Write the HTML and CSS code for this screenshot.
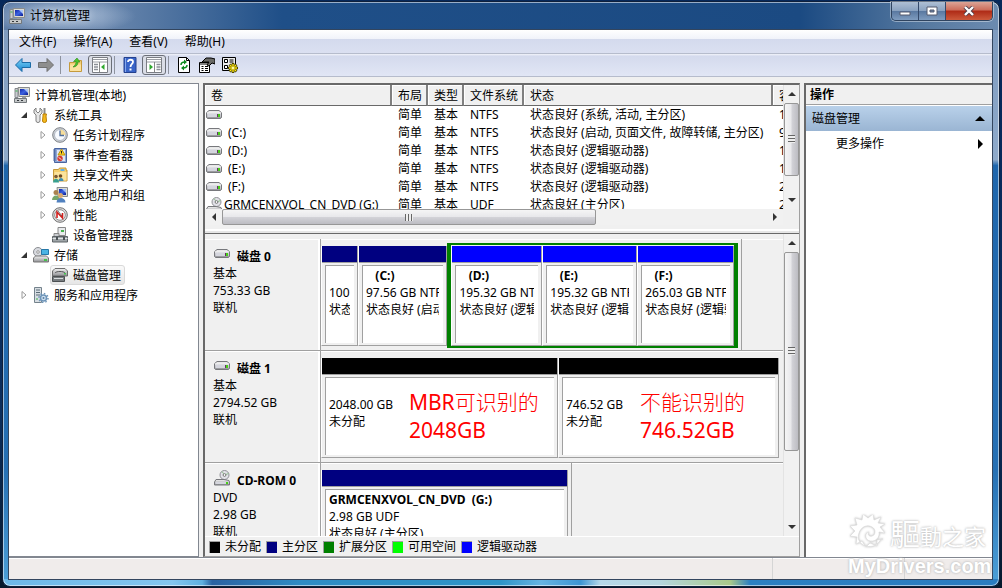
FILE: index.html
```html
<!DOCTYPE html>
<html lang="zh-CN">
<head>
  <meta charset="UTF-8">
  <meta name="viewport" content="width=device-width, initial-scale=1.0">
  <title>计算机管理</title>
  <link rel="stylesheet" href="styles.css">
</head>
<body>
  <!-- Icon set -->
  <svg class="sprites" aria-hidden="true">
    <defs>
      <linearGradient id="gray" x1="0" y1="0" x2="0" y2="1"><stop offset="0" stop-color="#f4f4f4"/><stop offset="1" stop-color="#8f9094"/></linearGradient>
      <linearGradient id="screen" x1="0" y1="0" x2="1" y2="1"><stop offset="0" stop-color="#1226a8"/><stop offset="0.5" stop-color="#3c62e0"/><stop offset="1" stop-color="#0a1c90"/></linearGradient>
      <linearGradient id="sky" x1="0" y1="0" x2="0" y2="1"><stop offset="0" stop-color="#7fd4f8"/><stop offset="1" stop-color="#1585d0"/></linearGradient>
    </defs>
    <symbol id="i-computer" viewBox="0 0 16 16">
      <path d="M4 0.5h11.5v9H5z" fill="#dcdcd4" stroke="#8a8c8c"/>
      <path d="M6 2h8v6H6z" fill="url(#screen)"/>
      <path d="M10 2h4v4z" fill="#a9c4f6"/>
      <path d="M1 1.5h3v9H1z" fill="#c9ccd0" stroke="#85888c"/>
      <path d="M1.5 4h2" stroke="#37b34a"/>
      <path d="M8 10h4v2H8z" fill="#9da0a4"/>
      <path d="M0.5 11.5h12v4h-12z" fill="#c4c7c8" stroke="#73787c"/>
      <path d="M3 13h2v1H3zM7 13h2v1H7z" fill="#33383c"/>
    </symbol>
    <symbol id="i-tools" viewBox="0 0 16 16">
      <path d="M3 1v3l2 2 2-2V1l2 2v3L7 8v6c0 2-4 2-4 0V8L1 6V3z" fill="#e6e6e6" stroke="#808080"/>
      <path d="M11.5 1v7" stroke="#8a8a8a" stroke-width="2"/>
      <path d="M10 7h3.500l-.5 2 .5 5c0 2-4 2-4 0l.5-5z" fill="#f5b91c" stroke="#b97f08"/>
    </symbol>
    <symbol id="i-clock" viewBox="0 0 16 16">
      <circle cx="8" cy="8" r="7.300" fill="#cfd3d8" stroke="#7d8186"/>
      <circle cx="8" cy="8" r="5.500" fill="#f8fbff" stroke="#b2b8c2"/>
      <path d="M8 2.500A5.500 5.500 0 0 1 13.500 8H8z" fill="#f6dd9a"/>
      <path d="M8 3.500V8.500h4" fill="none" stroke="#4e6d9a" stroke-width="1.300"/>
    </symbol>
    <symbol id="i-event" viewBox="0 0 16 16">
      <path d="M2.500 1.500h12v14h-12z" fill="#8fa6d4" stroke="#4864a0"/>
      <path d="M5 3h8v11H5z" fill="#dde6f5"/>
      <path d="M1 3h3M1 5h3M1 7h3M1 9h3M1 11h3M1 13h3" stroke="#5570a8"/>
      <path d="M9.500 2l3.500 6H6z" fill="#ffd324" stroke="#be9308"/>
      <path d="M9.500 4v2.500" stroke="#222"/>
      <circle cx="8" cy="11.500" r="2.700" fill="#d63a31"/>
      <path d="M6.800 10.300l2.400 2.400" stroke="#fff"/>
    </symbol>
    <symbol id="i-share" viewBox="0 0 16 16">
      <path d="M1.500 2.500h5l1-1.500h6.500v2h1v11h-13.500z" fill="#f5cf6d" stroke="#c5993b"/>
      <path d="M8.500 2h4v2h-4z" fill="#5fb0e8"/>
      <path d="M2.500 5h12v8.500h-12z" fill="#fbe39c"/>
      <circle cx="4" cy="9.500" r="1.800" fill="#7c5a34"/><path d="M1 15.500c0-5 6-5 6 0z" fill="#38a090"/>
      <circle cx="8.500" cy="9" r="1.800" fill="#6f4a20"/><path d="M6.500 14c0-4 5-4 5 0z" fill="#3e8fb4"/>
    </symbol>
    <symbol id="i-users" viewBox="0 0 16 16">
      <path d="M5 0.500h10.500v9H6z" fill="#dcdcd4" stroke="#8a8c8c"/>
      <path d="M7 2h7v6H7z" fill="url(#screen)"/>
      <path d="M10 2h4v4z" fill="#9fbdf5"/>
      <circle cx="4" cy="5.500" r="2.500" fill="#a98250"/><path d="M0 13c0-6 8-6 8 0z" fill="#77a66a"/>
      <circle cx="8.500" cy="8.500" r="2.500" fill="#d9aa70"/><path d="M4.500 15.500c0-6 9-6 9 0z" fill="#5181bf"/>
    </symbol>
    <symbol id="i-perf" viewBox="0 0 16 16">
      <circle cx="8" cy="8" r="7.300" fill="#e0e0e0" stroke="#707070"/>
      <circle cx="8" cy="8" r="5.300" fill="#fff" stroke="#8c8c8c"/>
      <path d="M5 11V5l5.500 6V6" fill="none" stroke="#d2201e" stroke-width="1.600"/>
      <path d="M6 4l4 5" stroke="#444" stroke-width=".7"/>
    </symbol>
    <symbol id="i-device" viewBox="0 0 16 16">
      <path d="M6 0.500h7.500v8H6z" fill="#e9ebed" stroke="#888"/>
      <path d="M9 3h3v2H9z" fill="#44b24c"/>
      <path d="M2 6.500h5v3H2z" fill="#c9ccd0" stroke="#888"/>
      <path d="M0.500 9.500h15v5.500h-15z" fill="#9fa5a8" stroke="#5c6266"/>
      <path d="M0.500 11.500h15" stroke="#e1e4e6"/>
      <path d="M4 10h2v3H4zM11 10h2v3h-2z" fill="#4c5256"/>
    </symbol>
    <symbol id="i-storage" viewBox="0 0 16 16">
      <circle cx="5" cy="5" r="4.500" fill="#d9dbe0" stroke="#8b8d92"/>
      <circle cx="5" cy="5" r="1.300" fill="#fff" stroke="#999"/>
      <path d="M8.500 2.500h7v5h-7z" fill="#4ab4e4" stroke="#2678a8"/>
      <path d="M2.500 9h11l2 2v4h-15v-4z" fill="url(#gray)" stroke="#777"/>
      <path d="M11 12h3v2h-3z" fill="#45c34c"/>
    </symbol>
    <symbol id="i-diskmgmt" viewBox="0 0 16 16">
      <path d="M3 1.500h10l2.500 2.500v5h-15V4z" fill="url(#gray)" stroke="#6c6c6c"/>
      <path d="M3 6c1-2 9-2 10 0" fill="none" stroke="#555"/>
      <path d="M12 6h2v1.500h-2z" fill="#41c44a"/>
      <path d="M0.500 9.500h12v5h-12z" fill="#777c7f" stroke="#4c5052"/>
      <path d="M2 11.500h9" stroke="#d9dcde"/>
    </symbol>
    <symbol id="i-services" viewBox="0 0 16 16">
      <path d="M1.500 0.500h7v15h-7z" fill="#d7dde2" stroke="#74828c"/>
      <path d="M3 3h4M3 5.500h4M3 8h4" stroke="#5b6c78"/>
      <path d="M3 12h2" stroke="#3cb34a"/>
      <circle cx="10.500" cy="11" r="3" fill="#cfe0f0" stroke="#6d94b8" stroke-width="1.500"/>
      <circle cx="10.500" cy="11" r="4.500" fill="none" stroke="#6d94b8" stroke-width="1.500" stroke-dasharray="1.500 2"/>
      <circle cx="10.500" cy="11" r="1" fill="#5a7ea2"/>
    </symbol>
    <symbol id="i-drive" viewBox="0 0 16 16">
      <path d="M3 3.500h10l2.500 2.200v4.800l-1 1h-13l-1-1V5.700z" fill="url(#gray)" stroke="#77787c"/>
      <path d="M1 6h14" stroke="#fff"/>
      <path d="M1.500 6.500h13v3.500h-13z" fill="#d5d6de"/>
      <path d="M11 7h1v3h-1z" fill="#636"/><path d="M12 7h2v3h-2z" fill="#46d016"/>
    </symbol>
    <symbol id="i-cd" viewBox="0 0 16 16">
      <circle cx="10.500" cy="5" r="4.500" fill="#e2e2e8" stroke="#909096"/>
      <path d="M10.500 5L8 1.500M10.500 5l4-1.500" stroke="#8fc48c"/>
      <circle cx="10.500" cy="5" r="1.400" fill="#fff" stroke="#777"/>
      <path d="M2 9.500h8l5 1 .5 1.500v3h-15v-3z" fill="url(#gray)" stroke="#77787c"/>
      <path d="M1.500 12h13v2h-13z" fill="#d5d6de"/>
      <path d="M12 12h2v2h-2z" fill="#46d016"/>
    </symbol>
    <symbol id="i-back" viewBox="0 0 16 16">
      <path d="M0.500 8L7 1.500v4h8.500v5H7v4z" fill="url(#sky)" stroke="#1b6ba6"/>
    </symbol>
    <symbol id="i-forward" viewBox="0 0 16 16">
      <path d="M15.500 8L9 1.500v4H0.500v5H9v4z" fill="#8e8e8e" stroke="#707070"/>
    </symbol>
    <symbol id="i-up" viewBox="0 0 16 16">
      <path d="M1.500 5.500h5l1-2h6v11h-12z" fill="#f3cf79" stroke="#c49a3d"/>
      <path d="M2 7.500h11V14H2z" fill="#fbe2a0"/>
      <path d="M3 10c3 0 5-2 5-5h2L7 1 3.500 4.500H6C6 7 5 8.500 3 10z" transform="translate(2 0)" fill="#4cc32c" stroke="#2b8a18" stroke-width=".6"/>
    </symbol>
    <symbol id="i-tree-pane" viewBox="0 0 16 16">
      <path d="M0.500 0.500h15v15h-15z" fill="#fff" stroke="#7b7e84"/>
      <path d="M1 2.500h14M1 5h14" stroke="#9a9da4"/>
      <path d="M2 7.500h4M2 10h4M2 12.500h4" stroke="#8b8f96" stroke-width="1.500"/>
      <path d="M7.500 5v10" stroke="#888"/><path d="M12.500 7v6l-3.500-3z" fill="#30a82e"/>
    </symbol>
    <symbol id="i-action-pane" viewBox="0 0 16 16">
      <path d="M0.500 0.500h15v15h-15z" fill="#fff" stroke="#7b7e84"/>
      <path d="M1 2.500h14M1 5h14" stroke="#9a9da4"/>
      <path d="M10.500 7.500h4M10.500 10h4M10.500 12.500h4" stroke="#8b8f96" stroke-width="1.500"/>
      <path d="M8.500 5v10" stroke="#888"/><path d="M3.500 7v6L7 10z" fill="#30a82e"/>
    </symbol>
    <symbol id="i-help" viewBox="0 0 16 16">
      <path d="M2 0.500h12v15H2z" fill="#3964c8" stroke="#24418e"/>
      <path d="M3.500 1v14" stroke="#86a8ec"/>
      <path d="M6 5c0-3 5-3 5 0 0 2-2.500 2-2.500 5" fill="none" stroke="#fff" stroke-width="1.800"/>
      <path d="M7.500 11.500h2v2h-2z" fill="#fff"/>
    </symbol>
    <symbol id="i-refresh" viewBox="0 0 16 16">
      <path d="M2.500 0.500h8l3 3v12h-11z" fill="#fff" stroke="#000"/>
      <path d="M10.500 0.500v3h3" fill="none" stroke="#000"/>
      <path d="M5 8c0-3 2-3 4-3M11 8c0 3-2 3-4 3" fill="none" stroke="#0b8a1e" stroke-width="1.500"/>
      <path d="M8 2.500L11 5 8 7.500zM8 8.500L5 11l3 2.500z" fill="#0b8a1e"/>
    </symbol>
    <symbol id="i-properties" viewBox="0 0 16 16">
      <path d="M0.500 5.500h10v10h-10z" fill="#fff" stroke="#000"/>
      <path d="M1 7h9M2.500 9.500h2M6 9.500h3M2.500 11.500h2M6 11.500h3M2.500 13.500h2M6 13.500h3" stroke="#000"/>
      <path d="M3 5l4-4h5l4 1v5l-3-1-3 3-2-1 2-3H6z" fill="#6a6a66" stroke="#000"/>
    </symbol>
    <symbol id="i-settings" viewBox="0 0 16 16">
      <path d="M0.500 0.500h13v13h-13z" fill="#eee" stroke="#000"/>
      <path d="M2.500 2.500h3v3h-3zM2.500 8.500h3v3h-3z" fill="#fff" stroke="#000"/>
      <path d="M7.500 3h4M7.500 5h4M7 12h3" stroke="#000"/>
      <path d="M11 6v10M6 11h10M7.500 7.500l7 7M14.500 7.500l-7 7" stroke="#4a4400" stroke-width="2.600"/>
      <path d="M11 7v8M7 11h8M8 8l6 6M14 8l-6 6" stroke="#ffe611" stroke-width="1.400"/>
      <circle cx="11" cy="11" r="2" fill="#fff9a0" stroke="#b5a500"/>
    </symbol>
    <symbol id="i-up-arrow" viewBox="0 0 8 8"><path d="M0 6l4-4 4 4z"/></symbol>
    <symbol id="i-down-arrow" viewBox="0 0 8 8"><path d="M0 2l4 4 4-4z"/></symbol>
    <symbol id="i-left-arrow" viewBox="0 0 8 8"><path d="M6 0L2 4l4 4z"/></symbol>
    <symbol id="i-right-arrow" viewBox="0 0 8 8"><path d="M2 0l4 4-4 4z"/></symbol>
    <symbol id="i-open" viewBox="0 0 8 8"><path d="M7 1v6H1z" fill="#333"/></symbol>
    <symbol id="i-closed" viewBox="0 0 8 8"><path d="M2 0.500L6 4 2 7.500z" fill="#fff" stroke="#999"/></symbol>
  </svg>

  <div class="window">
    <header class="titlebar">
      <svg class="icon"><use href="#i-computer"/></svg>
      <h1>计算机管理</h1>
      <div class="window-buttons">
        <button type="button" aria-label="最小化"><svg viewBox="0 0 12 10"><path d="M1 6h10v3H1z" fill="#fff" stroke="#555b6e"/></svg></button>
        <button type="button" aria-label="最大化"><svg viewBox="0 0 12 10"><path d="M1 1h10v8H1z" fill="#fff" stroke="#555b6e"/><path d="M4 4h4v2H4z" fill="#6782a8" stroke="#555b6e"/></svg></button>
        <button type="button" class="close" aria-label="关闭"><svg viewBox="0 0 12 10"><path d="M2 1l8 8M10 1L2 9" stroke="#4d3c48" stroke-width="4"/><path d="M2 1l8 8M10 1L2 9" stroke="#fff" stroke-width="2.400"/></svg></button>
      </div>
    </header>

    <div class="client">
      <nav class="menubar">
        <button type="button">文件(F)</button>
        <button type="button">操作(A)</button>
        <button type="button">查看(V)</button>
        <button type="button">帮助(H)</button>
      </nav>
      <div class="toolbar">
        <button type="button" aria-label="后退"><svg class="icon"><use href="#i-back"/></svg></button>
        <button type="button" aria-label="前进"><svg class="icon"><use href="#i-forward"/></svg></button>
        <span class="sep"></span>
        <button type="button" aria-label="向上"><svg class="icon"><use href="#i-up"/></svg></button>
        <button type="button" class="pressed" aria-label="控制台树"><svg class="icon"><use href="#i-tree-pane"/></svg></button>
        <span class="sep"></span>
        <button type="button" aria-label="帮助"><svg class="icon"><use href="#i-help"/></svg></button>
        <button type="button" class="pressed" aria-label="操作窗格"><svg class="icon"><use href="#i-action-pane"/></svg></button>
        <span class="sep"></span>
        <button type="button" aria-label="刷新"><svg class="icon"><use href="#i-refresh"/></svg></button>
        <button type="button" aria-label="属性"><svg class="icon"><use href="#i-properties"/></svg></button>
        <button type="button" aria-label="设置"><svg class="icon"><use href="#i-settings"/></svg></button>
      </div>

      <main class="panes">
        <!-- Console tree -->
        <ul class="tree">
          <li class="root"><svg class="icon"><use href="#i-computer"/></svg><span>计算机管理(本地)</span></li>
          <li class="level-1"><svg class="twist"><use href="#i-open"/></svg><svg class="icon"><use href="#i-tools"/></svg><span>系统工具</span></li>
          <li class="level-2"><svg class="twist"><use href="#i-closed"/></svg><svg class="icon"><use href="#i-clock"/></svg><span>任务计划程序</span></li>
          <li class="level-2"><svg class="twist"><use href="#i-closed"/></svg><svg class="icon"><use href="#i-event"/></svg><span>事件查看器</span></li>
          <li class="level-2"><svg class="twist"><use href="#i-closed"/></svg><svg class="icon"><use href="#i-share"/></svg><span>共享文件夹</span></li>
          <li class="level-2"><svg class="twist"><use href="#i-closed"/></svg><svg class="icon"><use href="#i-users"/></svg><span>本地用户和组</span></li>
          <li class="level-2"><svg class="twist"><use href="#i-closed"/></svg><svg class="icon"><use href="#i-perf"/></svg><span>性能</span></li>
          <li class="level-2"><svg class="twist"></svg><svg class="icon"><use href="#i-device"/></svg><span>设备管理器</span></li>
          <li class="level-1"><svg class="twist"><use href="#i-open"/></svg><svg class="icon"><use href="#i-storage"/></svg><span>存储</span></li>
          <li class="level-2"><svg class="twist"></svg><div class="selected"><svg class="icon"><use href="#i-diskmgmt"/></svg><span>磁盘管理</span></div></li>
          <li class="level-1"><svg class="twist"><use href="#i-closed"/></svg><svg class="icon"><use href="#i-services"/></svg><span>服务和应用程序</span></li>
        </ul>

        <section class="center">
          <div class="volumes">
            <div class="volume-list">
              <table>
                <colgroup><col class="c-name"><col class="c-short"><col class="c-short"><col class="c-fs"><col class="c-state"><col class="c-more"></colgroup>
                <thead>
                  <tr><th>卷</th><th>布局</th><th>类型</th><th>文件系统</th><th>状态</th><th>容量</th></tr>
                </thead>
                <tbody>
                  <tr><td><svg class="icon"><use href="#i-drive"/></svg></td><td>简单</td><td>基本</td><td>NTFS</td><td>状态良好 (系统, 活动, 主分区)</td><td>1</td></tr>
                  <tr><td><svg class="icon"><use href="#i-drive"/></svg><span class="letter">(C:)</span></td><td>简单</td><td>基本</td><td>NTFS</td><td>状态良好 (启动, 页面文件, 故障转储, 主分区)</td><td>9</td></tr>
                  <tr><td><svg class="icon"><use href="#i-drive"/></svg><span class="letter">(D:)</span></td><td>简单</td><td>基本</td><td>NTFS</td><td>状态良好 (逻辑驱动器)</td><td>1</td></tr>
                  <tr><td><svg class="icon"><use href="#i-drive"/></svg><span class="letter">(E:)</span></td><td>简单</td><td>基本</td><td>NTFS</td><td>状态良好 (逻辑驱动器)</td><td>1</td></tr>
                  <tr><td><svg class="icon"><use href="#i-drive"/></svg><span class="letter">(F:)</span></td><td>简单</td><td>基本</td><td>NTFS</td><td>状态良好 (逻辑驱动器)</td><td>2</td></tr>
                  <tr><td><svg class="icon"><use href="#i-cd"/></svg><span>GRMCENXVOL_CN_DVD (G:)</span></td><td>简单</td><td>基本</td><td>UDF</td><td>状态良好 (主分区)</td><td>2</td></tr>
                </tbody>
              </table>
            </div>
            <div class="vscroll">
              <button type="button" aria-label="向上滚动"><svg><use href="#i-up-arrow"/></svg></button>
              <div class="thumb" style="flex-grow: 73"></div>
              <div class="track" style="flex-grow: 16"></div>
              <button type="button" aria-label="向下滚动"><svg><use href="#i-down-arrow"/></svg></button>
            </div>
          </div>
          <div class="hscroll">
            <button type="button" aria-label="向左滚动"><svg><use href="#i-left-arrow"/></svg></button>
            <div class="thumb" style="flex-grow: 373"></div>
            <div class="track" style="flex-grow: 170"></div>
            <button type="button" aria-label="向右滚动"><svg><use href="#i-right-arrow"/></svg></button>
          </div>
          <div class="splitter"></div>

          <!-- Graphical disk view -->
          <div class="graph">
            <div class="disks">
              <div class="disk">
                <div class="disk-label">
                  <h2><svg class="icon"><use href="#i-drive"/></svg>磁盘 0</h2>
                  <p>基本</p><p>753.33 GB</p><p>联机</p>
                </div>
                <div class="disk-map bounded" style="width: 421px">
                  <div class="partition primary" style="flex-grow: 36"><div class="box"><div class="info"><h3>&nbsp;</h3><p>100 MB</p><p>状态良好</p></div></div></div>
                  <div class="partition primary" style="flex-grow: 90"><div class="box"><div class="info"><h3>   (C:)</h3><p>97.56 GB NTFS</p><p>状态良好 (启动, 页面文件)</p></div></div></div>
                  <div class="extended" style="flex-grow: 291">
                    <div class="partition logical" style="flex-grow: 91"><div class="box"><div class="info"><h3>   (D:)</h3><p>195.32 GB NTFS</p><p>状态良好 (逻辑驱动器)</p></div></div></div>
                    <div class="partition logical" style="flex-grow: 95"><div class="box"><div class="info"><h3>   (E:)</h3><p>195.32 GB NTFS</p><p>状态良好 (逻辑驱动器)</p></div></div></div>
                    <div class="partition logical" style="flex-grow: 97"><div class="box"><div class="info"><h3>   (F:)</h3><p>265.03 GB NTFS</p><p>状态良好 (逻辑驱动器)</p></div></div></div>
                  </div>
                </div>
              </div>
              <div class="disk">
                <div class="disk-label">
                  <h2><svg class="icon"><use href="#i-drive"/></svg>磁盘 1</h2>
                  <p>基本</p><p>2794.52 GB</p><p>联机</p>
                </div>
                <div class="disk-map" style="width: 458px">
                  <div class="partition" style="flex-grow: 237"><div class="box"><div class="info"><h3>&nbsp;</h3><p>2048.00 GB</p><p>未分配</p></div></div><p class="note"><span>MBR</span>可识别的<br><span>2048GB</span></p></div>
                  <div class="partition" style="flex-grow: 221"><div class="box"><div class="info"><h3>&nbsp;</h3><p>746.52 GB</p><p>未分配</p></div></div><p class="note">不能识别的<br><span>746.52GB</span></p></div>
                </div>
              </div>
              <div class="disk">
                <div class="disk-label">
                  <h2><svg class="icon"><use href="#i-cd"/></svg>CD-ROM 0</h2>
                  <p>DVD</p><p>2.98 GB</p><p>联机</p>
                </div>
                <div class="disk-map bounded" style="width: 251px">
                  <div class="partition primary" style="flex-grow: 1"><div class="box"><div class="info"><h3>GRMCENXVOL_CN_DVD  (G:)</h3><p>2.98 GB UDF</p><p>状态良好 (主分区)</p></div></div></div>
                </div>
              </div>
            </div>
            <div class="vscroll">
              <button type="button" aria-label="向上滚动"><svg><use href="#i-up-arrow"/></svg></button>
              <div class="thumb" style="flex-grow: 198"></div>
              <div class="track" style="flex-grow: 68"></div>
              <button type="button" aria-label="向下滚动"><svg><use href="#i-down-arrow"/></svg></button>
            </div>
          </div>
          <ul class="legend">
            <li><i class="swatch"></i>未分配</li>
            <li><i class="swatch primary"></i>主分区</li>
            <li><i class="swatch ext"></i>扩展分区</li>
            <li><i class="swatch free"></i>可用空间</li>
            <li><i class="swatch logical"></i>逻辑驱动器</li>
          </ul>
        </section>

        <aside class="actions">
          <h2>操作</h2>
          <button type="button" class="group"><span>磁盘管理</span><svg viewBox="0 0 10 10"><path d="M0 7l5-5 5 5z"/></svg></button>
          <button type="button" class="more"><span>更多操作</span><svg viewBox="0 0 10 10"><path d="M3 0l5 5-5 5z"/></svg></button>
        </aside>
      </main>

      <footer class="statusbar"><span class="main-cell"></span><span class="mid-cell"></span><span class="end-cell"></span></footer>
    </div>
  </div>

  <div class="watermark">
    <div class="brand">
      <svg viewBox="0 0 40 38"><path d="M33 24c-3 6-9 9-15 7-7-2-9-8-7-13 2-6 8-9 13-6 4 2 4 8 0 9-3 1-5-2-3-4-5 1-4 8 1 9 6 1 10-4 9-9l6 1-5-6 5-3-7-1 3-6-7 3-1-6-5 4-5-4-1 6-7-2 2 7-7 1 5 5-5 5 7 1-1 7 6-3 4 6 4-4 7 3 0-6 6-1z" fill="#fff" stroke="#ddd" stroke-width=".7"/></svg>
      <span><b>驅</b>動之家</span>
    </div>
    <div class="site">MyDrivers.com</div>
  </div>
</body>
</html>
```
FILE: styles.css
```css
/* General Reset */
* {
  margin: 0;
  padding: 0;
  box-sizing: border-box;
}

body {
  font-family: "Noto Sans", "Noto Sans CJK SC", sans-serif;
  font-size: 12px;
  line-height: 17px;
  color: #000;
  height: 100vh;
  padding: 1px 2px 1px 2px;
  background: linear-gradient(#06285a, #0b2d5c 70%, #06182c);
  overflow: hidden;
  position: relative;
}

ul {
  list-style: none;
}

button {
  font: inherit;
  color: inherit;
  background: none;
  border: none;
}

h1, h2, h3 {
  font-size: 12px;
}

.sprites {
  position: absolute;
  width: 0;
  height: 0;
}

.icon {
  width: 16px;
  height: 16px;
  flex: none;
}

/* Window frame */
.window {
  height: 100%;
  display: flex;
  flex-direction: column;
  padding: 0 6px 6px 5px;
  border: 1px solid #10203a;
  border-radius: 8px;
  box-shadow: inset 0 0 0 1px rgba(255, 255, 255, 0.55);
  background:
    linear-gradient(90deg, #6cb8e8, #84c6ef 17%, #5fb0e0 20%, #2a62a2 21%, #2f8cc4 30%, #2f95c8 50%, #66b4e2 54%, #3d95d2 58%, #b6d8ea 60%, #b4d5dd 66%, #a9c98a 73%, #2c80c2 75%, #2a7cc0) bottom / 100% 7px no-repeat,
    radial-gradient(ellipse 75px 18px at 58px 14px, rgba(205, 220, 238, 0.75), rgba(205, 220, 238, 0)) top left / 140px 28px no-repeat,
    linear-gradient(90deg, #5d7ca6, #6b88ae 10%, #1f4f88 28%, #1b4a82 80%, #55789f 92%, #6c8bb0) top / 100% 28px no-repeat,
    linear-gradient(#7b98bd, #8faaca 27%, #1f66ac 28%, #2670b4 80%, #4da0d8);
}

.titlebar {
  height: 27px;
  flex: none;
  display: flex;
  align-items: center;
  gap: 5px;
  padding-left: 1px;
}

.titlebar h1 {
  font-weight: normal;
  text-shadow: 0 0 8px rgba(255, 255, 255, 0.6);
}

.window-buttons {
  margin-left: auto;
  align-self: flex-start;
  display: flex;
  border: 1px solid #2f4460;
  border-top: none;
  border-radius: 0 0 5px 5px;
  overflow: hidden;
  box-shadow: 0 0 0 1px rgba(255, 255, 255, 0.4);
}

.window-buttons button {
  width: 27px;
  height: 18px;
  border-right: 1px solid #34496a;
  background: linear-gradient(#aebfd4, #8aa2c0 48%, #58779f 50%, #7f9cbf);
}

.window-buttons .close {
  width: 46px;
  border-right: none;
  background: linear-gradient(#dca496, #cc6c5a 45%, #ae2a16 50%, #cc5a3c);
}

.window-buttons svg {
  width: 12px;
  height: 10px;
}

.client {
  flex: 1;
  min-height: 0;
  display: flex;
  flex-direction: column;
  border: 1px solid #33455e;
  background: #f0f0f0;
}

/* Menu and toolbar */
.menubar {
  height: 24px;
  flex: none;
  display: flex;
  align-items: center;
  gap: 1px;
  padding-left: 2px;
  background: linear-gradient(#fff, #f1f3fa 38%, #d4daed 40%, #dbe0f1);
  border-bottom: 1px solid #b6bccc;
}

.menubar button {
  padding: 0 8px;
}

.toolbar {
  height: 23px;
  flex: none;
  display: flex;
  align-items: center;
  gap: 2px;
  padding-left: 3px;
  background: linear-gradient(#f2f4fb, #d4daed 10%, #e1e6f5);
  border-bottom: 1px solid #b6bccc;
}

.toolbar button {
  width: 21px;
  height: 20px;
  display: flex;
  align-items: center;
  justify-content: center;
}

.toolbar .pressed {
  width: 24px;
  border: 1px solid #6b6f78;
  border-radius: 3px;
  background: #dadde6;
}

.toolbar .sep {
  width: 1px;
  height: 18px;
  margin-right: 2px;
  background: #8e939e;
}

.toolbar .sep:first-of-type {
  margin-left: 2px;
}

/* Panes */
.panes {
  flex: 1;
  min-height: 0;
  display: grid;
  grid-template-columns: 190px minmax(0, 1fr) 188px;
  grid-template-rows: minmax(0, 1fr);
  gap: 4px;
  padding-top: 6px;
}

.tree {
  background: #fff;
  border: 1px solid #828790;
  border-left: none;
  padding: 1px 0 0 5px;
}

.tree li {
  height: 20px;
  display: flex;
  align-items: center;
  gap: 5px;
  white-space: nowrap;
}

.tree .level-1 {
  padding-left: 6px;
}

.tree .level-2 {
  padding-left: 25px;
}

.twist {
  width: 8px;
  height: 8px;
  flex: none;
}

.selected {
  height: 20px;
  display: flex;
  align-items: center;
  gap: 5px;
  margin-left: -2px;
  padding: 0 3px 0 1px;
  border: 1px solid #d9d9d9;
  border-radius: 3px;
  background: linear-gradient(#fafafa, #e6e6e6);
}

.center {
  display: flex;
  flex-direction: column;
  min-width: 0;
  border: 1px solid #a0a0a0;
  border-top: 2px solid #696969;
  border-left: 2px solid #696969;
}

/* Volume table */
.volumes {
  height: 124px;
  flex: none;
  display: flex;
}

.volume-list {
  flex: 1;
  min-width: 0;
  overflow: hidden;
  background: #fff;
}

table {
  width: 620px;
  table-layout: fixed;
  border-collapse: separate;
  border-spacing: 0;
}

.c-name {
  width: 187px;
}

.c-short {
  width: 36px;
}

.c-fs {
  width: 60px;
}

.c-state {
  width: 249px;
}

th {
  height: 21px;
  padding: 0 0 0 6px;
  text-align: left;
  font-weight: normal;
  white-space: nowrap;
  background: #f0f0f0;
  border-right: 2px solid #808080;
  border-bottom: 1px solid #696969;
  box-shadow: inset 1px 1px #fff;
}

td {
  height: 18px;
  padding: 0 0 0 6px;
  line-height: 18px;
  white-space: nowrap;
}

td:first-child {
  display: flex;
  align-items: center;
  gap: 2px;
  padding-left: 1px;
}

.letter {
  padding-left: 4px;
}

/* Scrollbars */
.vscroll {
  width: 16px;
  flex: none;
  display: flex;
  flex-direction: column;
  background: #f1f1f1;
  border-left: 1px solid #e3e3e3;
}

.hscroll {
  height: 16px;
  flex: none;
  display: flex;
  margin-right: 16px;
  background: #f1f1f1;
}

.vscroll button {
  height: 18px;
}

.hscroll button {
  width: 17px;
}

.vscroll button,
.hscroll button {
  display: flex;
  align-items: center;
  justify-content: center;
}

.vscroll button svg,
.hscroll button svg {
  width: 8px;
  height: 8px;
  fill: #333;
}

.thumb {
  flex-basis: 0;
  display: flex;
  align-items: center;
  justify-content: center;
  border: 1px solid #979797;
  border-radius: 2px;
  background: linear-gradient(90deg, #f5f5f5, #e8e8eb 48%, #d3d3d8 52%, #bcbcc2);
}

.hscroll .thumb {
  background: linear-gradient(#f5f5f5, #e8e8eb 48%, #d3d3d8 52%, #bcbcc2);
}

.thumb:before {
  content: '';
  width: 7px;
  height: 8px;
  background: repeating-linear-gradient(#666 0 1px, #eee 1px 3px);
}

.hscroll .thumb:before {
  width: 8px;
  height: 7px;
  background: repeating-linear-gradient(90deg, #666 0 1px, #eee 1px 3px);
}

.track {
  flex-basis: 0;
}

.splitter {
  height: 9px;
  flex: none;
  border-bottom: 1px solid #696969;
  background: linear-gradient(#f0f0f0 4px, #fff 4px 6px, #e6e6e6 6px);
}

/* Disk view */
.graph {
  flex: 1;
  min-height: 0;
  display: flex;
}

.disks {
  flex: 1;
  min-width: 0;
  overflow: hidden;
  padding-top: 5px;
}

.disk {
  height: 112px;
  display: flex;
  border-bottom: 1px solid #a0a0a0;
  box-shadow: inset 0 1px #fff;
}

.disk-label {
  width: 116px;
  flex: none;
  padding: 9px 0 0 8px;
  border-right: 1px solid #a0a0a0;
  box-shadow: inset -2px 1px #fff;
}

.disk-label h2 {
  display: flex;
  align-items: center;
  gap: 7px;
  white-space: nowrap;
}

.disk-label h2 .icon {
  margin: -5px 0 0 1px;
}

.disk-map {
  flex: none;
  display: flex;
  padding: 7px 0 4px;
}

.disk-map.bounded {
  padding-right: 3px;
  border-right: 1px solid #a0a0a0;
}

.partition {
  flex-basis: 0;
  min-width: 0;
  position: relative;
  display: flex;
  flex-direction: column;
  border-left: 1px solid #fff;
  border-right: 1px solid #a0a0a0;
  border-bottom: 1px solid #a0a0a0;
}

.partition:before {
  content: '';
  height: 16px;
  flex: none;
  background: #000;
  border-bottom: 1px solid #a0a0a0;
}

.partition.primary:before {
  background: #000080;
}

.partition.logical:before {
  background: #0000ff;
}

.box {
  flex: 1;
  min-height: 0;
  margin: 2px 3px;
  padding: 1px 4px 0 3px;
  border-left: 1px solid #a0a0a0;
  border-top: 1px solid #a0a0a0;
  background: #fff;
}

.info {
  overflow: hidden;
  white-space: pre;
}

.extended {
  flex-basis: 0;
  min-width: 0;
  display: flex;
  margin: -3px 0 -2px;
  padding-top: 1px;
  border: 2px solid #008000;
  border-width: 2px 4px;
}

.note {
  position: absolute;
  left: 37%;
  top: 30px;
  font-weight: 300;
  font-size: 21px;
  line-height: 28px;
  white-space: nowrap;
  color: #ff0000;
}

.note span {
  font-weight: normal;
}

.legend {
  height: 20px;
  flex: none;
  display: flex;
  align-items: center;
  gap: 5px;
  padding-left: 4px;
  border-top: 1px solid #fff;
}

.legend li {
  display: flex;
  align-items: center;
  gap: 5px;
}

.swatch {
  width: 11px;
  height: 12px;
  background: #000;
  border-left: 1px solid #a0a0a0;
  border-top: 1px solid #a0a0a0;
}

.swatch.primary {
  background: #000080;
}

.swatch.ext {
  background: #008000;
}

.swatch.free {
  background: #00ff00;
}

.swatch.logical {
  background: #0000ff;
}

/* Actions pane */
.actions {
  background: #fff;
  border-top: 2px solid #696969;
  border-left: 2px solid #696969;
}

.actions h2 {
  height: 20px;
  padding-left: 4px;
  line-height: 20px;
  background: #f0f0f0;
  border-bottom: 1px solid #a0a0a0;
}

.actions button {
  width: 100%;
  height: 25px;
  display: flex;
  align-items: center;
  justify-content: space-between;
  padding: 0 7px 0 6px;
}

.actions .group {
  margin-top: 1px;
  background: linear-gradient(#b9d1ea, #9ab5d3);
}

.actions .more {
  padding-left: 30px;
}

.actions svg {
  width: 10px;
  height: 10px;
}

.statusbar {
  height: 22px;
  flex: none;
  display: flex;
  border-top: 1px solid #828790;
  background: #f0eceb;
  box-shadow: inset 0 1px #fff;
}

.statusbar .main-cell {
  flex: 1;
  border-right: 1px solid #d5d5d5;
}

.statusbar .mid-cell {
  width: 132px;
  border-right: 1px solid #d5d5d5;
}

.statusbar .end-cell {
  width: 87px;
}

/* Corner watermark */
.watermark {
  position: absolute;
  right: 10px;
  bottom: 10px;
  width: 144px;
  color: #fff;
  text-shadow: 0 0 2px #bbb, 0 0 3px #ccc;
}

.brand {
  display: flex;
  align-items: center;
  gap: 2px;
  font-family: "Noto Sans CJK TC", sans-serif;
  font-size: 22px;
  line-height: 38px;
  white-space: nowrap;
}

.brand b {
  font-size: 30px;
  font-weight: normal;
}

.brand svg {
  width: 40px;
  height: 38px;
  flex: none;
  filter: drop-shadow(0 0 1px #bbb);
}

.site {
  font-family: "Liberation Sans", sans-serif;
  font-weight: bold;
  font-size: 20px;
  line-height: 24px;
}
```
